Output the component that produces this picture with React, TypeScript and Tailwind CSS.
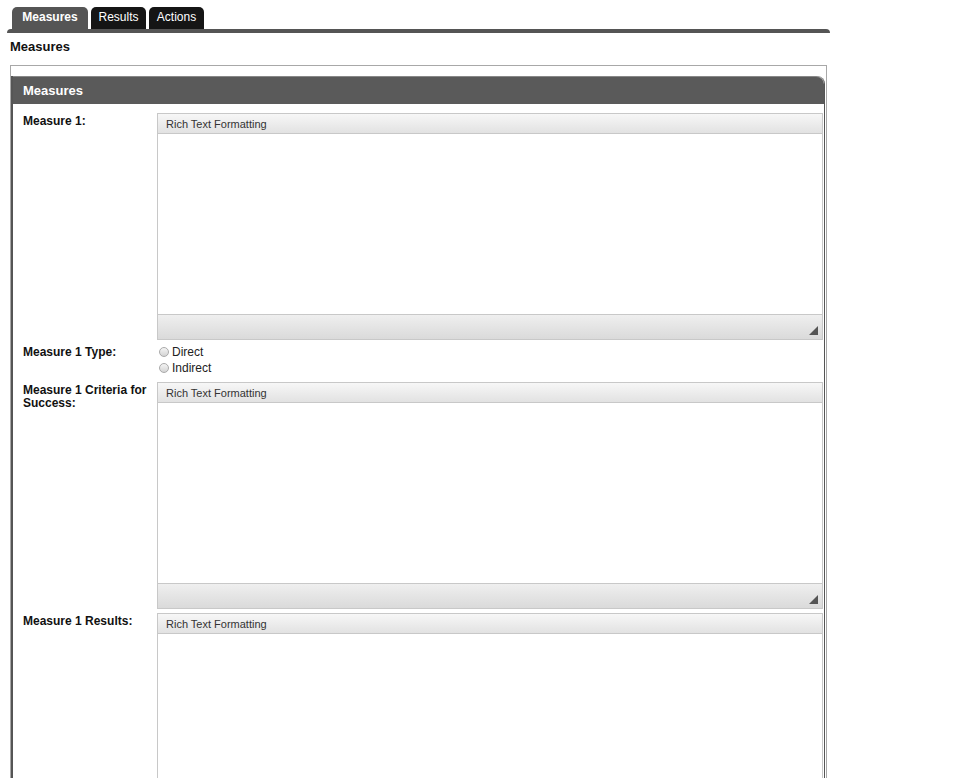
import React from "react";

function Editor({ height }: { height: number }) {
  return (
    <div className="w-[666px] border border-[#c8c8c8] bg-white">
      <div className="h-[20px] border-b border-[#c8c8c8] bg-gradient-to-b from-[#f7f7f7] to-[#e2e2e2] pl-[8px] text-[11px] leading-[21px] text-[#333]">
        Rich Text Formatting
      </div>
      <div style={{ height }} className="bg-white" />
      <div className="relative h-[25px] border-t border-[#c8c8c8] bg-gradient-to-b from-[#efefef] to-[#dadada]">
        <svg
          className="absolute right-[4px] bottom-[4px]"
          width="9"
          height="9"
          viewBox="0 0 9 9"
        >
          <polygon points="9,0 9,9 0,9" fill="#555" />
        </svg>
      </div>
    </div>
  );
}

function Radio({ label }: { label: string }) {
  return (
    <label className="flex h-[16px] items-center gap-[3px] text-[12px] text-[#222]">
      <span className="ml-[2px] inline-block h-[10px] w-[10px] rounded-full border border-[#aaa] bg-gradient-to-b from-[#f4f4f4] to-[#d4d4d4]" />
      {label}
    </label>
  );
}

function Row({
  label,
  className,
  children,
}: {
  label: React.ReactNode;
  className?: string;
  children: React.ReactNode;
}) {
  return (
    <div className={"flex " + (className ?? "")}>
      <div className="w-[144px] shrink-0 pl-[10px] pr-[6px] pt-[2px] text-[12px] font-bold leading-[13px] text-[#111]">
        {label}
      </div>
      {children}
    </div>
  );
}

function App() {
  return (
    <div
      className="h-[778px] w-full overflow-hidden bg-white"
      style={{ fontFamily: '"Liberation Sans", Arial, sans-serif' }}
    >
      <div className="w-[823px] pl-[7px] box-content">
        {/* tabs */}
        <div className="flex gap-[3px] pl-[5px] pt-[7px]">
          <div className="h-[22px] w-[76px] rounded-t-[5px] bg-[#555] text-center text-[12px] font-bold leading-[20px] text-white">
            Measures
          </div>
          <div className="h-[22px] w-[55px] rounded-t-[5px] bg-[#151515] text-center text-[12px] leading-[21px] text-white">
            Results
          </div>
          <div className="h-[22px] w-[55px] rounded-t-[5px] bg-[#151515] text-center text-[12px] leading-[21px] text-white">
            Actions
          </div>
        </div>
        <div className="h-[4px] w-[823px] rounded-t-[4px] bg-[#555]" />
      </div>

      <div className="mt-[6px] pl-[10px] text-[13px] font-bold leading-[16px] text-[#111]">
        Measures
      </div>

      {/* outer box */}
      <div className="ml-[10px] mt-[10px] w-[817px] border border-[#a8a8a8] border-b-0 pt-[10px] pr-[1px]">
        <div className="h-[800px] border-l-2 border-r border-[#555] rounded-tr-[8px]">
          <div className="h-[28px] rounded-tr-[8px] border-t border-[#888] bg-[#5a5a5a] pl-[10px] text-[13px] font-bold leading-[27px] text-white">
            Measures
          </div>

          <Row label="Measure 1:" className="mt-[9px]">
            <Editor height={180} />
          </Row>

          <Row label="Measure 1 Type:" className="mt-[4px]">
            <div className="flex flex-col">
              <Radio label="Direct" />
              <Radio label="Indirect" />
            </div>
          </Row>

          <Row label={<>Measure 1 Criteria for Success:</>} className="mt-[6px]">
            <Editor height={180} />
          </Row>

          <Row label="Measure 1 Results:" className="mt-[4px]">
            <Editor height={180} />
          </Row>
        </div>
      </div>
    </div>
  );
}

export default App;
